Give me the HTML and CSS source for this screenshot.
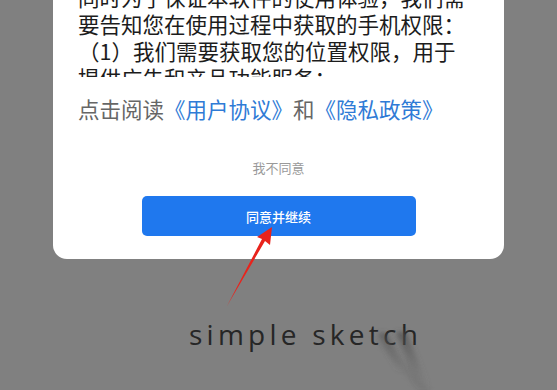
FILE: index.html
```html
<!DOCTYPE html>
<html lang="zh-CN">
<head>
<meta charset="utf-8">
<link rel="stylesheet" href="styles.css">
</head>
<body>
<div class="screen">
  <div class="card">
    <div class="scroll">
      <div class="text">
        同时为了保证本软件的使用体验，我们需<br>
        要告知您在使用过程中获取的手机权限：<br>
        （1）我们需要获取您的位置权限，用于<br>
        提供广告和产品功能服务；<br>
        （2）我们需要获取您的存储权限，用于
      </div>
    </div>
    <div class="links">点击阅读<span class="link">《用户协议》</span>和<span class="link">《隐私政策》</span></div>
    <div class="disagree">我不同意</div>
    <div class="agree">同意并继续</div>
  </div>
  <div class="brand">simple sketch</div>
  <svg class="arrow" width="557" height="390" viewBox="0 0 557 390">
    <polygon points="227,306 262,239 257,237 272,227 270,245 265,241" fill="#e8231c"/>
  </svg>
  <svg class="curl" width="557" height="390" viewBox="0 0 557 390">
    <defs>
      <filter id="b" x="-50%" y="-50%" width="200%" height="200%"><feGaussianBlur stdDeviation="2.5"/></filter>
      <linearGradient id="g" x1="0" y1="0" x2="0" y2="1">
        <stop offset="0" stop-color="#4a4a4a" stop-opacity="0.7"/>
        <stop offset="1" stop-color="#6a6a6a" stop-opacity="0"/>
      </linearGradient>
    </defs>
    <polygon points="378,333 386,333 408,370 398,372" fill="url(#g)" filter="url(#b)"/>
    <polygon points="396,332 406,332 430,390 418,390" fill="url(#g)" filter="url(#b)"/>
    <polygon points="372,336 380,336 432,392 420,392" fill="#666" opacity="0.25" filter="url(#b)"/>
  </svg>
</div>
</body>
</html>
```
FILE: styles.css
```css
* { box-sizing: border-box; }
html, body { margin: 0; padding: 0; }
body {
  width: 557px;
  height: 390px;
  overflow: hidden;
  background: #808080;
  font-family: "Noto Sans CJK SC", "Noto Sans", sans-serif;
}
.screen {
  position: relative;
  width: 557px;
  height: 390px;
  overflow: hidden;
}
.card {
  width: 451px;
  margin: -17px 0 0 53px;
  background: #fff;
  border-radius: 14px;
  padding: 0 25px 23px 25px;
  display: flex;
  flex-direction: column;
}
.scroll {
  height: 94px;
  overflow: hidden;
}
.text {
  font-size: 21.5px;
  line-height: 27px;
  color: #1c1c1c;
  white-space: nowrap;
}
.links {
  margin-top: 17px;
  font-size: 21.5px;
  line-height: 30px;
  color: #666;
  white-space: nowrap;
}
.link { color: #2f7bd6; }
.disagree {
  margin-top: 34px;
  font-size: 13px;
  line-height: 20px;
  color: #9a9a9a;
  text-align: center;
}
.agree {
  margin: 18px auto 0;
  width: 274px;
  height: 40px;
  border-radius: 5px;
  background: #1f78ee;
  color: #fff;
  font-size: 13px;
  font-weight: 500;
  display: flex;
  align-items: center;
  justify-content: center;
}
.brand {
  margin: 58px 0 0 189px;
  font-family: "Open Sans", "Lato", sans-serif;
  font-weight: 400;
  font-size: 28px;
  line-height: 34px;
  letter-spacing: 4.25px;
  color: #262626;
}
.arrow, .curl {
  position: absolute;
  left: 0;
  top: 0;
  pointer-events: none;
}
```
